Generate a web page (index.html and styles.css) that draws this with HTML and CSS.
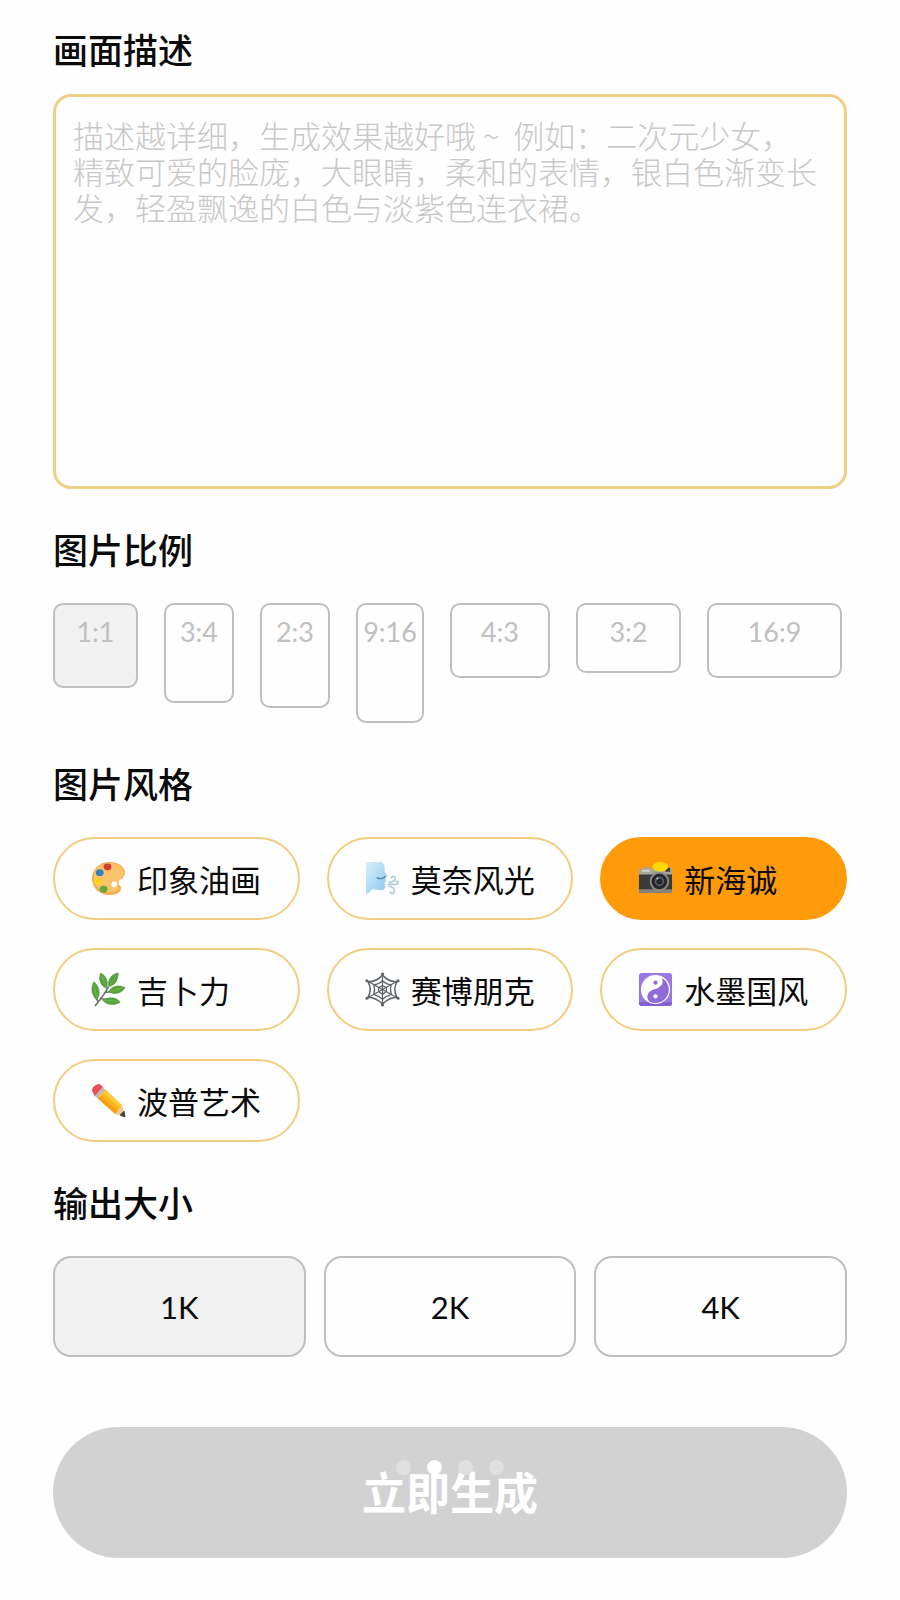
FILE: index.html
```
<!doctype html>
<html lang="zh-CN">

<head>
  <meta charset="utf-8">
  <meta name="viewport" content="width=device-width, initial-scale=1">
  <title>立即生成</title>
  <link rel="stylesheet" href="styles.css">
</head>

<body>
  <form class="page">
    <h2><label for="prompt">画面描述</label></h2>
    <textarea id="prompt" class="prompt" placeholder="描述越详细，生成效果越好哦 ~  例如：二次元少女，精致可爱的脸庞，大眼睛，柔和的表情，银白色渐变长发，轻盈飘逸的白色与淡紫色连衣裙。"></textarea>

    <h2>图片比例</h2>
    <div class="ratios">
      <button type="button" class="ratio r1-1 selected">1:1</button>
      <button type="button" class="ratio r3-4">3:4</button>
      <button type="button" class="ratio r2-3">2:3</button>
      <button type="button" class="ratio r9-16">9:16</button>
      <button type="button" class="ratio r4-3">4:3</button>
      <button type="button" class="ratio r3-2">3:2</button>
      <button type="button" class="ratio r16-9">16:9</button>
    </div>

    <h2>图片风格</h2>
    <div class="styles">
      <button type="button" class="pill">
        <svg class="icon" viewBox="0 0 36 36" aria-hidden="true">
          <path d="M19 1C8 1 1 9 1 18c0 10 8 17 18 17 7 0 12-3 12-7 0-3-3-3-3-6 0-2 2-3 4-4 2-2 3-4 3-7C34 5 27 1 19 1z" fill="#f0ae55"/>
          <path d="M19 2C9 2 3 9 3 17c0 9 7 15 16 15 5 0 9-2 10-4-2-2-3-5-1-8 2-2 6-4 6-9C33 6 26 2 19 2z" fill="#fac36a"/>
          <circle cx="24" cy="24" r="3" fill="#fff"/>
          <ellipse cx="17" cy="6" rx="4" ry="3.500" fill="#d83a32"/>
          <ellipse cx="9" cy="12" rx="4" ry="3.500" fill="#3182bd"/>
          <ellipse cx="7" cy="21" rx="4" ry="3.500" fill="#ffd11f"/>
          <ellipse cx="13" cy="29" rx="4" ry="3.500" fill="#62a93b"/>
        </svg>
        印象油画
      </button>
      <button type="button" class="pill">
        <svg class="icon" viewBox="0 0 36 36" aria-hidden="true">
          <defs>
            <linearGradient id="face" x1="0" y1="0" x2="1" y2="1">
              <stop offset="0" stop-color="#d8effc"/>
              <stop offset="1" stop-color="#8ac6ef"/>
            </linearGradient>
          </defs>
          <path d="M1 1h15c4 1 5 5 4 9l3 6-2 2 1 3-2 1 1 4c0 3-2 4-5 4l-8-1c-2 1-3 4-7 5z" fill="url(#face)"/>
          <path d="M12 17c4 2 7 1 9-1" fill="none" stroke="#5583a5" stroke-width="1.500"/>
          <g fill="none" stroke="#b7cbd5" stroke-width="1.800" stroke-linecap="round">
            <path d="M24 24h8c3 0 3-4 0-3M25 22c5-1 6-2 6-4s-3-3-4-1M25 26c5 1 6 3 5 6-1 2-3 2-4 0"/>
          </g>
        </svg>
        莫奈风光
      </button>
      <button type="button" class="pill active">
        <svg class="icon" viewBox="0 0 36 36" aria-hidden="true">
          <path d="M1 8h6V6h5v2h5l2-4h9l2 3h5v9H1z" fill="#a9a79a"/>
          <path d="M1 14h34v17H1z" fill="#3a3a3a"/>
          <path d="M1 29h34v4H1z" fill="#84837d"/>
          <path d="M28 7h5v4h-5z" fill="#453d2d"/>
          <path d="M4 10h8" stroke="#d5d3c8" stroke-width="2"/>
          <ellipse cx="23" cy="6" rx="8" ry="5" fill="#ffda00"/>
          <circle cx="22" cy="21" r="10" fill="#8b8b86"/>
          <circle cx="22" cy="21" r="8" fill="#252629"/>
          <circle cx="22" cy="21" r="5" fill="#555a60"/>
          <circle cx="22" cy="21" r="3" fill="#22252a"/>
          <circle cx="20" cy="18" r="1" fill="#c9d1d8"/>
        </svg>
        新海诚
      </button>
      <button type="button" class="pill">
        <svg class="icon" viewBox="0 0 36 36" aria-hidden="true">
          <path d="M4 35C9 29 14 23 18 15M7 30l-2-5M9 27c4 1 7 1 10 2M14 21c4 0 7-1 10-2" fill="none" stroke="#697068" stroke-width="1.600"/>
          <g fill="#55a63a" stroke="#3c8231" stroke-width=".5">
            <path d="M3 10c-4 7-2 14 3 19 4-6 3-14-3-19z"/>
            <path d="M10 1c-3 7 0 13 6 16 2-7 0-13-6-16z"/>
            <path d="M28 1c-7 1-11 7-10 14 7-1 10-7 10-14z"/>
            <path d="M35 16c-6-3-13-2-17 4 6 4 14 2 17-4z"/>
            <path d="M30 31c-4-5-11-6-18-2 4 5 12 6 18 2z"/>
          </g>
          <path d="M3 13l3 14M11 4l5 12M26 4l-7 10M33 16l-13 4M28 30l-14-1" fill="none" stroke="#7dbc5e" stroke-width=".7"/>
        </svg>
        吉卜力
      </button>
      <button type="button" class="pill">
        <svg class="icon" viewBox="0 0 36 36" aria-hidden="true">
          <g fill="none" stroke="#5e6468" stroke-width="1.300">
            <path d="M18 1v34M2 9l32 18M2 27L34 9"/>
            <path d="M18 3C14 8 9 10 3 10c3 5 3 11 0 16 6 0 11 3 15 7 4-4 9-7 15-7-3-5-3-11 0-16-6 0-11-2-15-7z" stroke-width="1.600"/>
            <path d="M18 9c-3 3-6 4-9 4 1 3 1 7 0 10 3 1 6 2 9 5 3-3 6-4 9-5-1-3-1-7 0-10-3 0-6-1-9-4z"/>
            <path d="M18 14l-4 2v4l4 3 4-3v-4z"/>
          </g>
          <g fill="#5e6468">
            <circle cx="18" cy="2" r="1.600"/><circle cx="18" cy="34" r="1.600"/>
            <circle cx="2" cy="9" r="1.600"/><circle cx="34" cy="9" r="1.600"/>
            <circle cx="2" cy="27" r="1.600"/><circle cx="34" cy="27" r="1.600"/>
          </g>
        </svg>
        赛博朋克
      </button>
      <button type="button" class="pill">
        <svg class="icon" viewBox="0 0 36 36" aria-hidden="true">
          <rect x="1" y="1" width="34" height="34" rx="3" fill="#9a78e3"/>
          <path d="M1 31h34v1c0 2-1 3-3 3H4c-2 0-3-1-3-3z" fill="#8360cf"/>
          <circle cx="18" cy="18" r="15" fill="#fff"/>
          <path d="M24 6a13.400 13.400 0 0 1-12 24.500c-4-3-3-10 3-12 2-1 5-1 7-3 4-3 4-7 2-9.500z" fill="#8f6bd9"/>
          <circle cx="18" cy="11" r="2.200" fill="#8f6bd9"/>
          <circle cx="18" cy="25" r="2.200" fill="#fff"/>
        </svg>
        水墨国风
      </button>
      <button type="button" class="pill">
        <svg class="icon" viewBox="0 0 36 36" aria-hidden="true">
          <path d="M1 8c0-4 4-7 8-7l4 4-9 9z" fill="#e84f5b"/>
          <path d="M4 13l8-9 3 3-8 9z" fill="#c9b7b3"/>
          <path d="M7 16l8-9 17 16-7 9z" fill="#ffb51c"/>
          <path d="M7 16l3-3 18 16-3 3z" fill="#f89d16"/>
          <path d="M12 10l3-3 17 16-2 3z" fill="#ffca3a"/>
          <path d="M25 32l7-9 3 12z" fill="#edc994"/>
          <path d="M30 33l4-4 1 6z" fill="#454440" stroke="#454440" stroke-linejoin="round"/>
        </svg>
        波普艺术
      </button>
    </div>

    <h2>输出大小</h2>
    <div class="sizes">
      <button type="button" class="size selected">1K</button>
      <button type="button" class="size">2K</button>
      <button type="button" class="size">4K</button>
    </div>

    <div class="submit">
      <button type="submit" class="generate" disabled>立即生成</button>
      <div class="dots">
        <span></span><span class="on"></span><span></span><span></span>
      </div>
    </div>
  </form>
</body>

</html>
```
FILE: styles.css
```
* { box-sizing:border-box; }
body { margin:0; background-color:#fefefe; color:#0a0a0a; font-family:"Noto Sans CJK SC",sans-serif; }
button, textarea { font-family:inherit; margin:0; }
button { color:inherit; background-color:#fefefe; cursor:pointer; }

.page { padding:25px 53px 41px; }
h2 { margin:36px 0 30px; font-size:35px; line-height:48px; font-weight:500; }
h2:first-child { margin:0 0 21px; }

.prompt { display:block; width:100%; height:395px; padding:20px 24px 20px 17px; border:solid 3px #efce85; border-radius:18px; background-color:#fefefe; font-size:31px; line-height:36px; resize:none; outline:0; overflow:hidden; }
.prompt::placeholder { color:#c8c8c8; font-weight:300; opacity:1; }

/* image ratio */
.ratios { display:flex; align-items:flex-start; gap:26px; }
.ratio { flex:none; display:flex; justify-content:center; padding:9px 0; border:solid 2px #bfbfbf; border-radius:10px; color:#c0c0c0; font-family:Lato,sans-serif; font-size:27px; line-height:36px; }
.r1-1 { width:85px; height:85px; }
.r3-4 { width:70px; height:100px; }
.r2-3 { width:70px; height:105px; }
.r9-16 { width:68px; height:120px; }
.r4-3 { width:100px; height:75px; }
.r3-2 { width:105px; height:70px; }
.r16-9 { width:135px; height:75px; }
.selected { background-color:#f1f1f1; }

/* image style */
.styles { display:grid; grid-template-columns:repeat(3, 1fr); gap:28px 27px; }
.pill { display:flex; align-items:center; gap:11px; height:83px; padding:0 0 0 36px; border:solid 2px #f1cd80; border-radius:42px; font-size:31px; line-height:44px; white-space:nowrap; }
.pill.active { background-color:#ff9b09; border-color:#ff9b09; }
.icon { flex:none; width:35px; height:35px; }

/* output size */
.sizes { display:grid; grid-template-columns:repeat(3, 1fr); gap:18px; }
.size { height:101px; padding:0; border:solid 2px #bfbfbf; border-radius:18px; font-family:Lato,sans-serif; font-size:31px; }

.submit { position:relative; margin-top:70px; }
.generate { display:block; width:100%; height:131px; padding:0 0 4px; border:0; border-radius:66px; background-color:#d2d2d2; color:#fff; font-size:44px; font-weight:700; }
.dots { position:absolute; top:33px; left:0; right:0; display:flex; justify-content:center; gap:16px; }
.dots span { width:15px; height:15px; border-radius:50%; background-color:#e0e0e0; }
.dots .on { background-color:#fff; }
```
